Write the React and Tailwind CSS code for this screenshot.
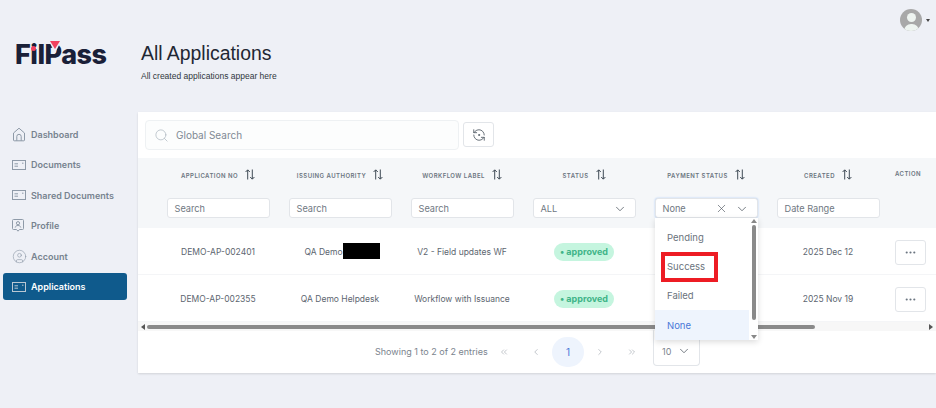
import { X, Search, ChevronDown, ChevronLeft, ChevronRight, ChevronsLeft, ChevronsRight, RefreshCcwDot, CircleUser, Ellipsis } from 'lucide-react'

const ARIAL = { fontFamily: '"Liberation Sans", Arial, sans-serif' }

function HomeIcon() {
  return (
    <svg width="14" height="15" viewBox="0 0 14 15" fill="none" stroke="#8e9aa8" strokeWidth="1">
      <path d="M1.5 6 7 1.2 12.5 6v7a.8.8 0 0 1-.8.8H2.3a.8.8 0 0 1-.8-.8z" />
      <path d="M4.8 13.8V9.5a2.2 2.2 0 0 1 4.4 0v4.3" />
    </svg>
  )
}

function DocIcon({ color = '#8e9aa8' }) {
  return (
    <svg width="14" height="10" viewBox="0 0 14 10" fill="none" stroke={color} strokeWidth="1">
      <rect x="0.5" y="0.5" width="13" height="9" />
      <path d="M2.5 3.8h3.5M2.5 6.2h3.5M10 3.2h1.5" />
    </svg>
  )
}

function ProfileIcon() {
  return (
    <svg width="12" height="13" viewBox="0 0 12 13" fill="none" stroke="#8e9aa8" strokeWidth="1">
      <path d="M1.5.5h9a1 1 0 0 1 1 1v8a1 1 0 0 1-1 1H7.5L6 12.2 4.5 10.5h-3a1 1 0 0 1-1-1v-8a1 1 0 0 1 1-1z" />
      <circle cx="6" cy="4.2" r="1.6" />
      <path d="M3.2 8.5c.4-1.5 1.5-2 2.8-2s2.4.5 2.8 2" />
    </svg>
  )
}

function SortIcon() {
  return (
    <svg width="10" height="11" viewBox="0 0 10 11" fill="none" stroke="#3f4a55" strokeWidth="1" className="ml-[7px] -mt-[3px] shrink-0">
      <path d="M2.7 10.5V1M.6 3 2.7.8 4.8 3M7.3.5V10M5.2 8l2.1 2.2L9.4 8" />
    </svg>
  )
}

function Logo() {
  return (
    <div className="relative ml-[15px] h-[26px] w-[95px]">
      <span className="block text-[27px] leading-[26px] font-extrabold tracking-[-0.5px] text-[#1a2038]" style={{ fontFamily: 'Inter, sans-serif' }}>
        FilPass
      </span>
      <svg width="16" height="13" viewBox="0 0 16 13" className="absolute left-[32px] -top-[1px]">
        <path d="M3 0h10L8 10z" fill="#eef0f6" stroke="#eef0f6" strokeWidth="2" />
        <path d="M3 0h10L8 8z" fill="#f2415f" />
      </svg>
      <span className="absolute left-[16px] top-[4px] h-[5px] w-[5px] rounded-full bg-[#f2415f]" />
    </div>
  )
}

const NAV = [
  { label: 'Dashboard', icon: <HomeIcon /> },
  { label: 'Documents', icon: <DocIcon /> },
  { label: 'Shared Documents', icon: <DocIcon /> },
  { label: 'Profile', icon: <ProfileIcon /> },
  { label: 'Account', icon: <CircleUser size={15} strokeWidth={1} color="#8e9aa8" /> },
  { label: 'Applications', icon: <DocIcon color="#b9c7d3" />, active: true },
]

function Sidebar() {
  return (
    <aside className="flex w-[138px] shrink-0 flex-col pt-[42px]">
      <Logo />
      <nav className="mt-[51px] flex flex-col">
        {NAV.map(item => (
          <div key={item.label} className="flex h-[30.5px] items-center">
            <div className={`ml-[3px] flex h-[27px] w-[124px] items-center rounded-[3px] pl-[9px] text-[9px] font-semibold ${item.active ? 'bg-[#0f5a8c] text-white' : 'text-[#77838f]'}`}>
              <span className="flex w-[19px] shrink-0">{item.icon}</span>
              {item.label}
            </div>
          </div>
        ))}
      </nav>
    </aside>
  )
}

function FilterBox({ children, className = '' }) {
  return (
    <div className={`flex h-[20px] w-[103px] items-center rounded-[3px] border border-[#e2e5e9] bg-white pl-[7px] pr-[8px] pt-[1px] text-[9.2px] text-[#6f7882] ${className}`}>
      {children}
    </div>
  )
}

const HEADERS = [
  { label: 'APPLICATION NO', filter: <FilterBox>Search</FilterBox> },
  { label: 'ISSUING AUTHORITY', filter: <FilterBox>Search</FilterBox> },
  { label: 'WORKFLOW LABEL', filter: <FilterBox>Search</FilterBox> },
  {
    label: 'STATUS',
    filter: (
      <FilterBox className="justify-between">
        ALL
        <ChevronDown size={14} strokeWidth={1.3} color="#4b545e" />
      </FilterBox>
    ),
  },
  {
    label: 'PAYMENT STATUS',
    filter: (
      <FilterBox className="border-[#6fa0ee] text-[#4b545e] shadow-[0_0_2px_#a9c6f5]">
        None
        <X size={13} strokeWidth={1.2} color="#4b545e" className="ml-auto mr-[7px]" />
        <ChevronDown size={14} strokeWidth={1.3} color="#4b545e" />
      </FilterBox>
    ),
  },
  { label: 'CREATED', filter: <FilterBox>Date Range</FilterBox> },
]

const ROWS = [
  { no: 'DEMO-AP-002401', issuer: 'QA Demo', redacted: true, flow: 'V2 - Field updates WF', created: '2025 Dec 12' },
  { no: 'DEMO-AP-002355', issuer: 'QA Demo Helpdesk', flow: 'Workflow with Issuance', created: '2025 Nov 19' },
]

function TableHead() {
  return (
    <div className="flex h-[70px] bg-[#f5f7f9] pl-[19px]">
      {HEADERS.map(h => (
        <div key={h.label} className="flex w-[122px] shrink-0 flex-col items-center">
          <div className="flex h-[40px] items-center pb-[5px] text-[6px] font-semibold tracking-[0.45px] text-[#6b7580]">
            {h.label}
            <SortIcon />
          </div>
          {h.filter}
        </div>
      ))}
      <div className="flex-1 pl-[6px] pt-[11px] text-[6px] font-semibold tracking-[0.45px] text-[#6b7580]">ACTION</div>
    </div>
  )
}

function Row({ row }) {
  return (
    <div className="flex h-[47px] items-center border-b border-[#f4f5f7] pl-[19px] pt-[2px] text-[8.5px] text-[#5d6670]">
      <div className="w-[122px] shrink-0 text-center">{row.no}</div>
      <div className="flex w-[122px] shrink-0 justify-center">
        {row.issuer}
        {row.redacted && <span className="-my-[3px] mr-[-4px] h-[16px] w-[37px] bg-black" />}
      </div>
      <div className="w-[122px] shrink-0 text-center">{row.flow}</div>
      <div className="flex w-[122px] shrink-0 justify-center">
        <span className="rounded-full bg-[#c5f5df] px-[6px] py-[2px] text-[9px] font-bold text-[#3fb488]">• approved</span>
      </div>
      <div className="w-[122px] shrink-0" />
      <div className="w-[122px] shrink-0 text-center">{row.created}</div>
      <div className="flex h-[25px] w-[31px] items-center justify-center rounded-[3px] border border-[#e2e5e9] ml-[6px]">
        <Ellipsis size={13} color="#6b7580" />
      </div>
    </div>
  )
}

function HScrollbar() {
  return (
    <div className="flex h-[9px] items-center bg-[#f7f7f7] pl-[3px]">
      <span className="h-0 w-0 border-y-[3px] border-r-[4px] border-y-transparent border-r-[#555]" />
      <span className="ml-[2px] h-[4px] w-[668px] rounded-full bg-[#8a8a8a]" />
      <span className="ml-auto mr-[3px] h-0 w-0 border-y-[3px] border-l-[4px] border-y-transparent border-l-[#555]" />
    </div>
  )
}

function Pagination() {
  const icon = { size: 10, strokeWidth: 1.1, color: '#7b848e' }
  const cell = 'flex h-[30px] w-[32px] items-center justify-center'
  return (
    <div className="flex h-[42px] items-start pl-[237px] text-[9px] text-[#7b848e]">
      <span className="mt-[15px] w-[113px] whitespace-nowrap leading-[12px]">Showing 1 to 2 of 2 entries</span>
      <div className="mt-[6px] flex">
        <span className={cell}><ChevronsLeft {...icon} /></span>
        <span className={cell}><ChevronLeft {...icon} /></span>
        <span className={`${cell} rounded-full bg-[#eef4fd] text-[10px] text-[#4a78d8]`}>1</span>
        <span className={cell}><ChevronRight {...icon} /></span>
        <span className={cell}><ChevronsRight {...icon} /></span>
      </div>
      <div className="ml-[5px] -mt-[1px] flex h-[36px] w-[47px] items-end justify-between rounded-b-[4px] border border-t-0 border-[#e2e5e9] pb-[7px] pl-[8px] pr-[8px] text-[9px]">
        10
        <ChevronDown size={14} strokeWidth={1.3} color="#4b545e" />
      </div>
    </div>
  )
}

function PaymentMenu() {
  const opts = ['Pending', 'Success', 'Failed', 'None']
  return (
    <div className="absolute left-[517px] top-[106px] flex h-[122px] w-[103px] bg-white text-[9.5px] text-[#6a737d] shadow-[0_2px_6px_rgba(0,0,0,0.14)]">
      <div className="flex w-[94px] flex-col justify-end">
        {opts.map(o => (
          <div key={o} className={`relative flex h-[29px] items-center pl-[12px] pt-[2px] ${o === 'None' ? 'h-[30px] bg-[#eef4fd] text-[#4a78d8]' : ''}`}>
            {o}
            {o === 'Success' && <span className="absolute left-[6px] top-0 h-[30px] w-[57px] border-[4px] border-[#ed1c24]" />}
          </div>
        ))}
      </div>
      <div className="flex w-[9px] flex-col items-center">
        <span className="mt-[1px] h-0 w-0 border-x-[3px] border-b-[4px] border-x-transparent border-b-[#888]" />
        <span className="mt-[2px] h-[95px] w-[4px] rounded-full bg-[#8a8a8a]" />
        <span className="mt-auto mb-[1px] h-0 w-0 border-x-[3px] border-t-[4px] border-x-transparent border-t-[#888]" />
      </div>
    </div>
  )
}

export default function App() {
  return (
    <div className="flex h-[408px] w-[936px] overflow-hidden bg-[#eef0f6]" style={{ fontFamily: 'Inter, sans-serif' }}>
      <Sidebar />
      <main className="flex min-w-0 flex-1 flex-col">
        <div className="flex h-[31px] items-end justify-end pr-[6px]">
          <div className="relative flex h-[22px] w-[22px] items-end justify-center overflow-hidden rounded-full bg-[#a8a8a8]">
            <span className="absolute top-[4px] h-[9px] w-[9px] rounded-full bg-[#eef4f0]" />
            <span className="h-[7px] w-[15px] rounded-t-full bg-[#eef4f0]" />
          </div>
          <span className="mb-[9px] ml-[4px] h-0 w-0 border-x-[2.5px] border-t-[3px] border-x-transparent border-t-[#444]" />
        </div>
        <div className="pl-[3px]" style={ARIAL}>
          <h1 className="mt-[10px] text-[19.4px] leading-[24px] text-[#1f2733]">All Applications</h1>
          <p className="mt-[5px] text-[8.5px] leading-[12px] text-[#2f3740]">All created applications appear here</p>
        </div>
        <section className="relative mt-[30px] h-[261px] bg-white shadow-[0_1px_2px_rgba(0,0,0,0.12)]">
          <div className="flex h-[46px] items-start pl-[7px] pt-[8px]">
            <div className="flex h-[30px] w-[314px] items-center rounded-[4px] border border-[#eef1f3] bg-[#fcfdfd] pl-[8px] text-[10px] text-[#7f8994]">
              <Search size={15} strokeWidth={1.1} color="#a9b3bc" className="mr-[7px]" />
              Global Search
            </div>
            <div className="ml-[4px] mt-[2px] flex h-[25px] w-[31px] items-center justify-center rounded-[3px] border border-[#e2e5e9]">
              <RefreshCcwDot size={14} strokeWidth={1.4} color="#4a535d" />
            </div>
          </div>
          <TableHead />
          {ROWS.map(r => <Row key={r.no} row={r} />)}
          <HScrollbar />
          <Pagination />
          <PaymentMenu />
        </section>
      </main>
    </div>
  )
}
